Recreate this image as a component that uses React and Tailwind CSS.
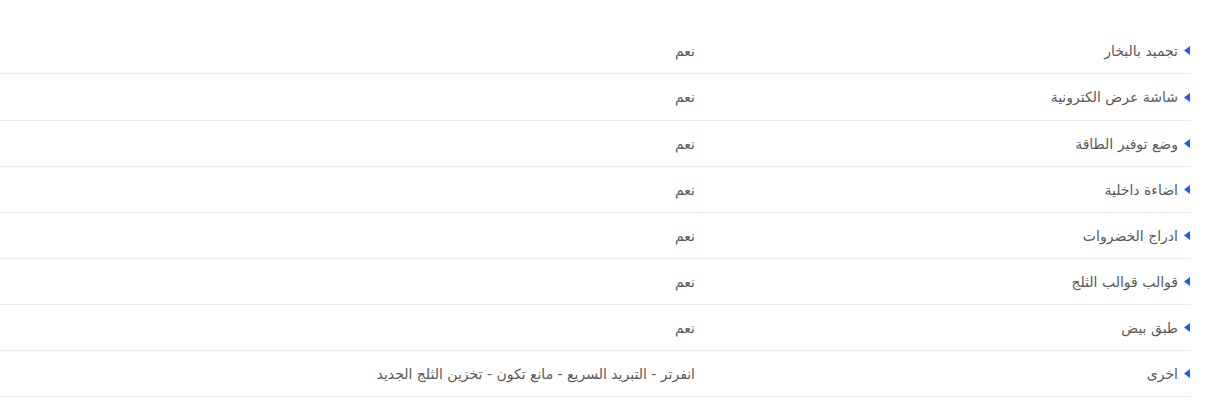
const specs = [
  { label: 'تجميد بالبخار', value: 'نعم' },
  { label: 'شاشة عرض الكترونية', value: 'نعم' },
  { label: 'وضع توفير الطاقة', value: 'نعم' },
  { label: 'اضاءة داخلية', value: 'نعم' },
  { label: 'ادراج الخضروات', value: 'نعم' },
  { label: 'قوالب قوالب الثلج', value: 'نعم' },
  { label: 'طبق بيض', value: 'نعم' },
  { label: 'اخرى', value: 'انفرتر - التبريد السريع - مانع تكون - تخزين الثلج الجديد' },
];

export default function App() {
  return (
    <div
      dir="rtl"
      className="w-[1208px] h-[415px] bg-white pt-[28px] pr-[17px] text-[14px] text-[#5a5a5a]"
      style={{ fontFamily: '"DejaVu Sans", "Noto Sans", sans-serif' }}
    >
      <div className="w-full">
        {specs.map((row, i) => (
          <div
            key={row.label}
            className={`flex items-center border-b border-[#ebebeb] ${i === 1 ? 'h-[47px]' : 'h-[46px]'}`}
          >
            {/* label cell */}
            <div className="w-[496px] flex items-center gap-[6px] pr-[1px]">
              <svg width="6" height="9" viewBox="0 0 6 9" className="shrink-0">
                <path d="M6 0 L0 4.5 L6 9 Z" fill="#1a5cff" />
              </svg>
              <span className="leading-none">{row.label}</span>
            </div>
            {/* value cell */}
            <div className="flex-1 leading-none">{row.value}</div>
          </div>
        ))}
      </div>
    </div>
  );
}
